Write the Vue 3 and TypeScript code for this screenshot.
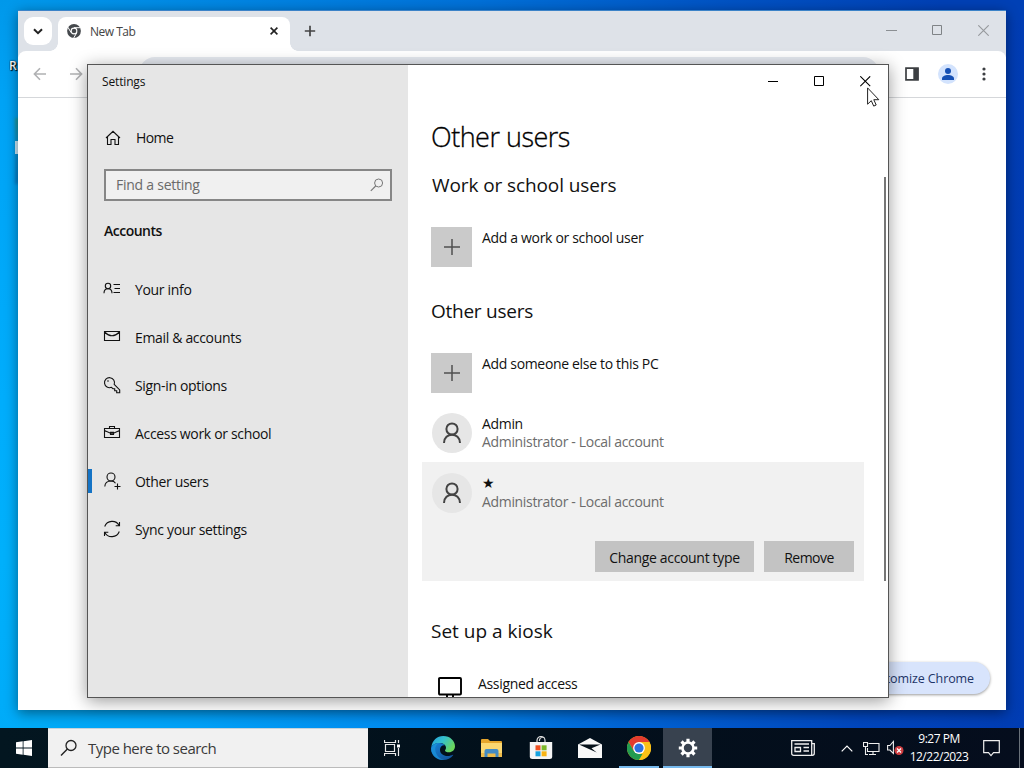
<script setup lang="ts">
interface NavItem {
  label: string
  icon: string
  active?: boolean
}

const nav: NavItem[] = [
  { label: 'Your info', icon: 'info' },
  { label: 'Email & accounts', icon: 'mail' },
  { label: 'Sign-in options', icon: 'key' },
  { label: 'Access work or school', icon: 'case' },
  { label: 'Other users', icon: 'user', active: true },
  { label: 'Sync your settings', icon: 'sync' },
]
</script>

<template>
  <div class="desktop">
    <span class="shortcut">R</span>
    <span class="shortcut-icon"></span>
    <span class="shortcut-mark"></span>

    <section class="chrome">
      <header class="tabs">
        <div class="tab-menu">
          <svg width="10" height="7" viewBox="0 0 10 7"><path d="M1 1.2 5 5.2 9 1.2" fill="none" stroke="#222" stroke-width="2" /></svg>
        </div>
        <div class="tab">
          <svg width="14" height="14" viewBox="0 0 14 14">
            <circle cx="7" cy="7" r="6.9" fill="#45494d" />
            <circle cx="7" cy="7" r="3.4" fill="#fff" />
            <circle cx="7" cy="7" r="2.3" fill="#45494d" />
            <path d="M7 3.7h6.3M4.1 8.6.9 3.2M9.8 8.7 6.7 14" stroke="#fff" stroke-width="1" />
          </svg>
          <span class="tab-title">New Tab</span>
          <svg class="tab-close" width="8" height="8" viewBox="0 0 8 8"><path d="m.6.6 6.8 6.8M7.4.6.6 7.4" stroke="#222" stroke-width="1.6" /></svg>
        </div>
        <svg class="tab-add" width="12" height="12" viewBox="0 0 12 12"><path d="M6 .8v10.4M.8 6h10.4" stroke="#444" stroke-width="1.7" /></svg>
        <div class="caption">
          <svg width="11" height="11" viewBox="0 0 11 11"><path d="M0 5.5h11" stroke="#8b8f93" /></svg>
          <svg width="11" height="11" viewBox="0 0 11 11"><path d="M.5.5h9v9H.5z" fill="none" stroke="#7f8386" /></svg>
          <svg width="11" height="11" viewBox="0 0 11 11"><path d="m.3.3 10.4 10.4M10.7.3.3 10.7" stroke="#96999d" stroke-width="1.1" /></svg>
        </div>
      </header>
      <div class="toolbar">
        <svg width="14" height="14" viewBox="0 0 14 14"><path d="M13 7H1.500M7 1.300 1.400 7 7 12.700" fill="none" stroke="#b0b1b3" stroke-width="1.600" /></svg>
        <svg class="forward" width="14" height="14" viewBox="0 0 14 14"><path d="M1 7h11.500M7 1.300 12.600 7 7 12.700" fill="none" stroke="#b0b1b3" stroke-width="1.600" /></svg>
        <div class="omnibox"></div>
        <svg width="14" height="14" viewBox="0 0 14 14"><path d="M1 1.200h12v11.600H1z" fill="#fff" stroke="#3c3f42" stroke-width="1.700" /><path d="M8.300 1h5v12h-5z" fill="#3c3f42" /></svg>
        <svg class="profile" width="20" height="20" viewBox="0 0 20 20"><circle cx="10" cy="10" r="10" fill="#d3e3fd" /><circle cx="10" cy="7" r="3" fill="#1550b4" /><path d="M4 16v-1.500c0-2 3-3.500 6-3.500s6 1.500 6 3.500V16z" fill="#1550b4" /></svg>
        <svg class="dots" width="4" height="14" viewBox="0 0 4 14"><g fill="#3c3f42"><circle cx="2" cy="2" r="1.600" /><circle cx="2" cy="7" r="1.600" /><circle cx="2" cy="12" r="1.600" /></g></svg>
      </div>
      <div class="page"><button class="customize">Customize Chrome</button></div>
    </section>

    <section class="settings">
      <aside class="side">
        <div class="app-title">Settings</div>
        <div class="home">
          <svg width="16" height="16" viewBox="0 0 16 16"><path d="M1 8 8 1.300 15 8M2.500 6.800v7.700h3.500v-5h4v5h3.500V6.800" fill="none" stroke="#111" stroke-width="1.100" /></svg>
          <span>Home</span>
        </div>
        <div class="search">
          <span>Find a setting</span>
          <svg width="14" height="14" viewBox="0 0 14 14"><circle cx="8.600" cy="5" r="4" fill="none" stroke="#777" /><path d="M5.700 8 .8 12.900" stroke="#777" stroke-width="1.100" /></svg>
        </div>
        <div class="group">Accounts</div>
        <nav>
          <div v-for="item in nav" :key="item.icon" class="nav-item" :class="{ active: item.active }">
            <svg width="18" height="18" viewBox="0 0 18 18" fill="none" stroke="#111" stroke-width="1.100">
              <template v-if="item.icon === 'info'">
                <circle cx="5" cy="6" r="2.700" /><path d="M1 13.200c0-6 8-6 8 0M10.500 4.500H17M11.500 8.500H17M10.500 12.500H17" />
              </template>
              <template v-else-if="item.icon === 'mail'">
                <path d="M1.500 3.500h15v9h-15zM1.500 4q7.500 7.500 15 0" />
              </template>
              <template v-else-if="item.icon === 'key'">
                <path d="M8.400 11.300 10 12.700h1.700v2h2v2h3v-2.800L11.200 8.400A5 5 0 1 0 8.400 11.300Z" /><circle cx="5" cy="5" r=".8" fill="#111" stroke="none" />
              </template>
              <template v-else-if="item.icon === 'case'">
                <path d="M1.500 4.500h15v9h-15zM6.500 4.500v-2h5v2M1.500 6.500l6 2.800h3l6-2.800M7.500 8.300h3v2.200h-3z" />
              </template>
              <template v-else-if="item.icon === 'user'">
                <circle cx="8" cy="5" r="4" /><path d="M1.800 14.500C2 10.500 4.800 9 8 9c1.900 0 3.500.5 4.500 2.200M14.500 11.500v6M11.500 14.500h6" />
              </template>
              <template v-else>
                <path d="M1.700 6.500A8 8 0 0 1 16.200 5.500M16.300 11.500A8 8 0 0 1 1.800 12.500M16.500 2v3.800h-3.800M1.500 16v-3.800h3.800" />
              </template>
            </svg>
            <span>{{ item.label }}</span>
          </div>
        </nav>
      </aside>

      <main class="main">
        <div class="win-buttons">
          <svg width="11" height="11" viewBox="0 0 11 11"><path d="M0 5.500h10" stroke="#000" /></svg>
          <svg width="11" height="11" viewBox="0 0 11 11"><path d="M.5.5h9v9H.5z" fill="none" stroke="#000" /></svg>
          <svg width="11" height="11" viewBox="0 0 11 11"><path d="m.3.300 9.900 9.900M10.200.3.3 10.200" stroke="#000" stroke-width="1.100" /></svg>
        </div>
        <h1>Other users</h1>
        <div class="scroller">
          <div class="content">
            <h2 class="h-work">Work or school users</h2>
            <div class="add">
              <div class="plus"><svg width="18" height="18" viewBox="0 0 18 18"><path d="M9 1v16M1 9h16" stroke="#505050" stroke-width="1.500" /></svg></div>
              <span>Add a work or school user</span>
            </div>
            <h2 class="h-other">Other users</h2>
            <div class="add">
              <div class="plus"><svg width="18" height="18" viewBox="0 0 18 18"><path d="M9 1v16M1 9h16" stroke="#505050" stroke-width="1.500" /></svg></div>
              <span>Add someone else to this PC</span>
            </div>
            <div class="user">
              <div class="avatar"><svg width="20" height="22" viewBox="0 0 20 22"><circle cx="10" cy="7" r="5.600" fill="none" stroke="#444" stroke-width="2" /><path d="M2 21c0-11 16-11 16 0" fill="none" stroke="#444" stroke-width="2" /></svg></div>
              <div><div class="name">Admin</div><div class="role">Administrator - Local account</div></div>
            </div>
            <div class="card">
              <div class="user">
                <div class="avatar"><svg width="20" height="22" viewBox="0 0 20 22"><circle cx="10" cy="7" r="5.600" fill="none" stroke="#444" stroke-width="2" /><path d="M2 21c0-11 16-11 16 0" fill="none" stroke="#444" stroke-width="2" /></svg></div>
                <div><div class="name star">★</div><div class="role">Administrator - Local account</div></div>
              </div>
              <div class="actions">
                <button class="change">Change account type</button>
                <button class="remove">Remove</button>
              </div>
            </div>
            <h2 class="h-kiosk">Set up a kiosk</h2>
            <div class="kiosk">
              <svg width="24" height="24" viewBox="0 0 24 24"><path d="M2 1h20q1 0 1 1v14.500q0 1-1 1H2q-1 0-1-1V2q0-1 1-1zM9 17v6M15 17v6" fill="none" stroke="#000" stroke-width="1.900" /></svg>
              <span>Assigned access</span>
            </div>
          </div>
          <div class="thumb"></div>
        </div>
      </main>
    </section>

    <footer class="taskbar">
      <div class="start">
        <svg width="16" height="16" viewBox="0 0 16 16" fill="#fff"><path d="M0 2.200 6.700 1.300v6.300H0zM7.500 1.200 16 0v7.600H7.500zM0 8.400h6.700v6.300L0 13.800zM7.500 8.400H16V16l-8.500-1.200z" /></svg>
      </div>
      <div class="task-search">
        <svg width="18" height="18" viewBox="0 0 18 18"><circle cx="11" cy="6.500" r="5" fill="none" stroke="#222" stroke-width="1.300" /><path d="M7.400 10.100 1 16.500" stroke="#222" stroke-width="1.400" /></svg>
        <span>Type here to search</span>
      </div>
      <div class="task-view">
        <svg width="17" height="16" viewBox="0 0 17 16" fill="none" stroke="#e8e8e8" stroke-width="1.200"><path d="M1.500 4.500h9v7h-9zM.5 0v2.500h11V0M.5 16v-2.500h11V16M14.500 0v3M14.500 8v8" /><path d="M13 4.500h3v3h-3z" fill="#fff" stroke="none" /></svg>
      </div>
      <div class="apps">
        <div class="app">
          <svg width="24" height="24" viewBox="0 0 24 24">
            <defs>
              <linearGradient id="edgeTop" x1="0" y1="0" x2="1" y2=".5"><stop offset="0" stop-color="#229fe0" /><stop offset=".5" stop-color="#35c1cd" /><stop offset="1" stop-color="#6bd65c" /></linearGradient>
              <linearGradient id="edgeLow" x1="0" y1="0" x2="1" y2="1"><stop offset="0" stop-color="#1684d9" /><stop offset="1" stop-color="#124f96" /></linearGradient>
            </defs>
            <path d="M.3 11C1.200 4.500 6 0 12.200 0 19.300 0 24 5 24 10.300c0 3.700-2.800 6-6 6-2.500 0-4-.8-4-1.600 0-.6 1-1.200 1-2.900C15 9 12 7 8.500 7 4.500 7 1.500 9 .3 11z" fill="url(#edgeTop)" />
            <path d="M0 12c.5-3 4-5 8.500-5 2.500 0 4.500 1 5.500 2.400-3-.4-5 1.800-5 4.600 0 3.500 3.500 6 7.500 6 2.200 0 4.200-.7 5.300-1.300.3-.1.500.2.300.5C20 22 16.400 24 12 24 5 24-.2 18.500 0 12z" fill="url(#edgeLow)" />
            <path d="M8.500 7C4 8.500 3.500 13 5 17c1.300 3.500 4 6 8 6.900C8 24.300 2.500 21.500.6 16-.8 11 3 7 8.500 7z" fill="#1b95dd" opacity=".7" />
          </svg>
        </div>
        <div class="app">
          <svg width="23" height="19" viewBox="0 0 23 19"><path d="M1 1q0-1 1-1h6l2 2h11q1 0 1 1v3H1z" fill="#e5a52c" /><path d="M1 4h21v14H1z" fill="#fbd771" /><path d="M1 14h21v4H1z" fill="#eebb4b" /><path d="M4.500 18v-6q0-2 2-2h10q2 0 2 2v6h-3v-3.500h-8V18z" fill="#438bc4" /></svg>
        </div>
        <div class="app">
          <svg width="24" height="24" viewBox="0 0 24 24"><path d="M8 6V4.500a4 4 0 0 1 8 0V6M10.500 5V4a3 3 0 0 1 5-2" fill="none" stroke="#ddd" stroke-width="1.200" /><path d="M.8 6h22.400v14.500q0 2.500-2.500 2.500H3.300q-2.500 0-2.500-2.500z" fill="#f5f5f5" /><path d="M6.500 9.300h5v5h-5z" fill="#ef5021" /><path d="M12.600 9.300h5v5h-5z" fill="#7db82a" /><path d="M6.500 15.300h5v5h-5z" fill="#16a2df" /><path d="M12.600 15.300h5v5h-5z" fill="#f8b414" /></svg>
        </div>
        <div class="app">
          <svg width="24" height="20" viewBox="0 0 24 20"><path d="M0 6.500 12 0l12 6.500V20H0z" fill="#f8f8f8" /><path d="M1.500 6.500h21L13.500 10.200l5.200 4.300L1.500 6.800z" fill="#06111a" /></svg>
        </div>
        <div class="app running">
          <svg width="24" height="24" viewBox="0 0 24 24"><circle cx="12" cy="12" r="12" fill="#f9bd13" /><path d="M1.600 6A12 12 0 0 1 22.400 6H12v6L6.800 15z" fill="#e33b2e" /><path d="M1.600 6 6.800 15l5.200 3h5.200L12 24A12 12 0 0 1 1.600 6z" fill="#239b50" /><path d="M22.400 6A12 12 0 0 1 12 24l5.200-9L12 6z" fill="#fbc117" /><circle cx="12" cy="12" r="5.900" fill="#fff" /><circle cx="12" cy="12" r="4.600" fill="#2d70e0" /></svg>
        </div>
        <div class="app running current">
          <svg width="20" height="20" viewBox="0 0 20 20"><circle cx="10" cy="10" r="5.500" fill="none" stroke="#fff" stroke-width="2.600" /><path d="M10 .8v3.400M10 15.800v3.400M.8 10h3.400M15.800 10h3.400M3.500 3.500l2.400 2.400M14.100 14.100l2.400 2.400M3.500 16.500l2.400-2.400M14.100 5.900l2.400-2.400" stroke="#fff" stroke-width="3.200" /></svg>
        </div>
      </div>
      <div class="tray">
        <svg class="news" width="24" height="16" viewBox="0 0 24 16" fill="none" stroke="#eee" stroke-width="1.300"><path d="M.7.700h20v14.600H2.700q-2 0-2-2zM20.700 3.700h2.600v9.600q0 2-2 2h-2M3.500 4h14.500M12.500 7.500h5.500M12.500 11h5.500M4 7.500h5.500v4H4z" /></svg>
        <svg class="caret" width="12" height="7" viewBox="0 0 12 7"><path d="m.7 6.300 5.300-5.300 5.300 5.300" fill="none" stroke="#fff" stroke-width="1.200" /></svg>
        <svg class="net" width="17" height="15" viewBox="0 0 17 15" fill="none" stroke="#eee" stroke-width="1.100"><path d="M5.500 2.500h10.500v8H4.500V7M.5 1.500h4v4h-4zM2.500 5.500v8H5M10 10.500v3M6 13.500h7" /></svg>
        <svg class="sound" width="17" height="16" viewBox="0 0 17 16"><path d="M.6 5.500h2.300L6.400 1.500v12L2.900 10H.6z" fill="none" stroke="#eee" stroke-width="1.100" /><circle cx="12" cy="10.500" r="4.500" fill="#cf3d40" /><path d="m10 8.500 4 4m0-4-4 4" stroke="#fff" stroke-width="1.200" /></svg>
        <div class="clock"><span>9:27 PM</span><span class="date">12/22/2023</span></div>
        <svg class="notice" width="17" height="17" viewBox="0 0 17 17"><path d="M.7.700h15.600v12H10.500L8 15.600l-2.500-2.900H.7z" fill="none" stroke="#eee" stroke-width="1.200" /></svg>
        <div class="peek"></div>
      </div>
    </footer>

    <svg class="cursor" width="13" height="20" viewBox="0 0 13 20"><path d="M.6.900v16.300l3.700-3.500 2.400 5.400 2.500-1.100-2.400-5.300h5z" fill="#fff" stroke="#222" stroke-width="1" /></svg>
  </div>
</template>

<style>
html, body { margin: 0; overflow: hidden; }
</style>

<style scoped>
* { box-sizing: border-box; }
svg { display: block; flex: none; }
button { border: 0; padding: 0; margin: 0; font: inherit; color: inherit; letter-spacing: inherit; }
.desktop {
  position: relative; width: 1024px; height: 768px; overflow: hidden;
  font-family: "Open Sans", "Noto Sans", sans-serif; font-size: 14px; letter-spacing: -.33px; color: #111; white-space: nowrap;
  background:
    linear-gradient(180deg, #0098ea, #00a3f5 100px, #00adfc 400px, #00b0fb 560px, #00aaf8 768px) 0 0 / 18px 768px no-repeat,
    linear-gradient(90deg, #009aec, #0088e4 200px, #0070d8 480px, #0053c4 720px, #0040b5 940px) 0 0 / 1024px 20px no-repeat,
    linear-gradient(90deg, #00adf7, #00a0f7 200px, #0087ed 440px, #0064d4 620px, #0046bd 860px, #003cb3);
}
.shortcut { position: absolute; left: 9px; top: 57px; width: 9px; overflow: hidden; font-size: 12px; font-weight: 600; color: #fff; text-shadow: 1px 1px 1px #000, 0 0 2px #000; }
.shortcut-icon { position: absolute; left: 15px; top: 118px; width: 4px; height: 66px; background: linear-gradient(#2d9a79, #0a8fcb 40%, #0a75c0); filter: blur(1.500px); opacity: .8; }
.shortcut-mark { position: absolute; left: 15px; top: 141px; width: 3px; height: 13px; background: #cdebfa; }

.chrome { position: absolute; left: 18px; top: 10px; width: 988px; height: 700px; background: #fff; border-top: 1px solid #3c83c8; box-shadow: 0 3px 12px rgba(0, 0, 0, .45); display: flex; flex-direction: column; }
.tabs { height: 46px; margin-bottom: -6px; background: #dee2e8; display: flex; align-items: flex-start; padding: 6px 0 0 6px; }
.tab-menu { width: 28px; height: 28px; border-radius: 9px; background: #fff; display: grid; place-items: center; }
.tab { position: relative; margin-left: 6px; width: 232px; height: 40px; border-radius: 8px 8px 0 0; background: #fff; display: flex; align-items: flex-start; padding: 7px 12px 0 9px; }
.tab::before, .tab::after { content: ""; position: absolute; bottom: 6px; width: 8px; height: 8px; }
.tab::before { left: -8px; background: radial-gradient(circle at 0 0, transparent 7.500px, #fff 8px); }
.tab::after { right: -8px; background: radial-gradient(circle at 100% 0, transparent 7.500px, #fff 8px); }
.tab-title { margin-left: 9px; font-size: 12px; line-height: 16px; letter-spacing: -.5px; color: #444; }
.tab-close { margin-left: auto; margin-top: 3px; }
.tab-add { margin: 8px 0 0 14px; }
.caption { margin: 8px 17px 0 auto; display: flex; gap: 35px; }
.toolbar { height: 47px; border-radius: 8px 8px 0 0; background: #fff; border-bottom: 1px solid #d5d7da; display: flex; align-items: center; padding: 0 20px 0 15px; }
.forward { margin-left: 22px; }
.omnibox { margin: -2px 15px 0 56px; height: 32px; flex: 1; border-radius: 16px; background: #e5e9f0; }
.omnibox + svg { margin-left: 11px; }
.profile { margin-left: 19px; }
.dots { margin-left: 24px; }
.page { flex: 1; display: flex; justify-content: flex-end; align-items: flex-end; padding: 0 16px 16px 0; }
.customize { width: 154px; height: 32px; border-radius: 16px; background: #d8e4fc; color: #1d3468; font-size: 12.500px; letter-spacing: -.1px; text-align: right; padding-right: 16px; box-shadow: 0 1px 3px rgba(0, 0, 0, .4); }

.settings { position: absolute; left: 87px; top: 64px; width: 802px; height: 634px; border: 1px solid #555; display: flex; box-shadow: 0 3px 16px rgba(0, 0, 0, .4); background: #fff; }
.side { width: 320px; background: #e6e6e6; }
.app-title { height: 34px; line-height: 34px; padding-left: 14px; font-size: 12px; letter-spacing: -.15px; }
.home { height: 48px; margin-top: 15px; display: flex; align-items: center; padding-left: 17px; gap: 15px; }
.home span { letter-spacing: -.6px; margin-top: -1px; }
.home svg { margin-top: -1px; }
.search { width: 288px; height: 32px; margin: 7px 0 0 16px; border: 2px solid #868686; background: #f0f0f0; color: #6a6a6a; display: flex; justify-content: space-between; align-items: center; padding: 0 6px 1px 10px; letter-spacing: -.25px; }
.search span { margin-top: -1px; }
.group { height: 50px; line-height: 50px; margin-top: 5px; padding-left: 16px; font-weight: 600; letter-spacing: -.5px; }
nav { margin-top: 9px; }
.nav-item { height: 48px; display: flex; align-items: center; padding-left: 11px; border-left: 4px solid transparent; gap: 14px; }
.nav-item.active { border-image: linear-gradient(transparent 12px, #1473c5 12px 36px, transparent 36px) 0 0 0 4; }

.main { width: 480px; overflow: hidden; display: flex; flex-direction: column; }
.win-buttons { height: 32px; display: flex; justify-content: flex-end; align-items: center; gap: 35px; padding-right: 17px; }
h1 { margin: 17px 0 0 23px; height: 46px; line-height: 46px; font-size: 27px; font-weight: 300; letter-spacing: -.5px; color: #000; -webkit-text-stroke: .3px #000; }
h2 { margin: 0 0 0 23px; height: 30px; line-height: 30px; font-size: 19px; font-weight: 400; letter-spacing: -.1px; }
.scroller { flex: 1; min-height: 0; display: flex; justify-content: space-between; }
.content { width: 456px; }
.thumb { width: 2px; height: 404px; margin: 17px 2px 0 0; background: #767676; }
.h-work { margin-top: 10px; margin-left: 24px; }
.add { display: flex; gap: 10px; height: 40px; margin-left: 23px; margin-top: 27px; line-height: 21px; }
.plus { width: 41px; height: 40px; background: #cacaca; display: grid; place-items: center; }
.h-other { margin-top: 29px; letter-spacing: -.25px; }
.user { display: flex; gap: 10px; margin: 20px 0 0 24px; height: 40px; }
.avatar { width: 40px; height: 40px; border-radius: 50%; background: #e6e6e6; display: grid; place-items: center; }
.name { line-height: 21px; height: 20px; }
.role { line-height: 18px; color: #6c6c6c; }
.star { font-family: "DejaVu Sans", sans-serif; font-size: 14px; }
.card { margin: 9px 0 0 14px; width: 442px; height: 119px; background: #f1f1f1; padding-top: 11px; }
.card .user { margin: 0 0 0 10px; }
.actions { display: flex; gap: 10px; margin: 28px 10px 0; justify-content: flex-end; }
.actions button { height: 31px; background: #c3c3c3; padding-top: 1px; }
.change { width: 159px; }
.remove { width: 90px; letter-spacing: -.5px; }
.h-kiosk { margin-top: 35px; letter-spacing: 0; }
.kiosk { display: flex; gap: 16px; margin: 27px 0 0 30px; line-height: 21px; }
.kiosk svg { margin-top: 4px; }

.taskbar { position: absolute; left: 0; bottom: 0; width: 1024px; height: 40px; background: linear-gradient(90deg, #031620, #02101b 50%, #050d1d); display: flex; }
.start { width: 48px; display: grid; place-items: center; }
.task-search { width: 320px; background: #f1f1f1; border-top: 1px solid #c5d2da; border-bottom: 1px solid #bbb; display: flex; align-items: center; gap: 10px; padding-left: 12px; font-size: 15px; letter-spacing: -.52px; color: #3a3a3a; }
.task-view { width: 48px; display: grid; place-items: center; }
.apps { display: flex; margin-left: 2px; }
.app { width: 49px; display: grid; place-items: center; position: relative; }
.app.running::after { content: ""; position: absolute; left: 5px; right: 4px; bottom: 0; height: 2px; background: #76b9ed; }
.app.current { background: #38424f; margin-right: -1px; width: 49px; }
.app.current::after { left: 0; right: 0; }
.tray { margin-left: auto; display: flex; align-items: center; color: #fff; }
.caret { margin-left: 26px; }
.net { margin-left: 10px; }
.sound { margin-left: 7px; }
.clock { width: 62px; margin-left: 4px; display: flex; flex-direction: column; align-items: center; font-size: 12px; line-height: 18px; letter-spacing: -.5px; }
.notice { margin-left: 13px; }
.peek { width: 5px; height: 40px; margin-left: 19px; border-left: 1px solid #69717a; }
.cursor { position: absolute; left: 867px; top: 87px; }
</style>
